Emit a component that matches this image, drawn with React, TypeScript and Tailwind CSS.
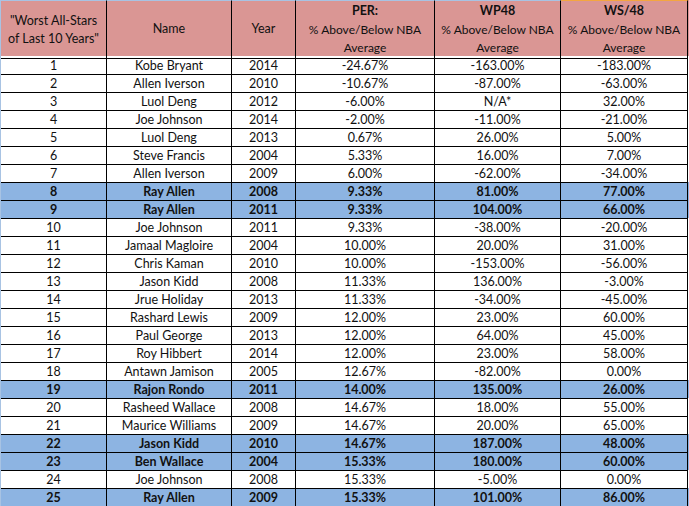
const rows: [string, string, string, string, string, string, boolean][] = [
  ["1", "Kobe Bryant", "2014", "-24.67%", "-163.00%", "-183.00%", false],
  ["2", "Allen Iverson", "2010", "-10.67%", "-87.00%", "-63.00%", false],
  ["3", "Luol Deng", "2012", "-6.00%", "N/A*", "32.00%", false],
  ["4", "Joe Johnson", "2014", "-2.00%", "-11.00%", "-21.00%", false],
  ["5", "Luol Deng", "2013", "0.67%", "26.00%", "5.00%", false],
  ["6", "Steve Francis", "2004", "5.33%", "16.00%", "7.00%", false],
  ["7", "Allen Iverson", "2009", "6.00%", "-62.00%", "-34.00%", false],
  ["8", "Ray Allen", "2008", "9.33%", "81.00%", "77.00%", true],
  ["9", "Ray Allen", "2011", "9.33%", "104.00%", "66.00%", true],
  ["10", "Joe Johnson", "2011", "9.33%", "-38.00%", "-20.00%", false],
  ["11", "Jamaal Magloire", "2004", "10.00%", "20.00%", "31.00%", false],
  ["12", "Chris Kaman", "2010", "10.00%", "-153.00%", "-56.00%", false],
  ["13", "Jason Kidd", "2008", "11.33%", "136.00%", "-3.00%", false],
  ["14", "Jrue Holiday", "2013", "11.33%", "-34.00%", "-45.00%", false],
  ["15", "Rashard Lewis", "2009", "12.00%", "23.00%", "60.00%", false],
  ["16", "Paul George", "2013", "12.00%", "64.00%", "45.00%", false],
  ["17", "Roy Hibbert", "2014", "12.00%", "23.00%", "58.00%", false],
  ["18", "Antawn Jamison", "2005", "12.67%", "-82.00%", "0.00%", false],
  ["19", "Rajon Rondo", "2011", "14.00%", "135.00%", "26.00%", true],
  ["20", "Rasheed Wallace", "2008", "14.67%", "18.00%", "55.00%", false],
  ["21", "Maurice Williams", "2009", "14.67%", "20.00%", "65.00%", false],
  ["22", "Jason Kidd", "2010", "14.67%", "187.00%", "48.00%", true],
  ["23", "Ben Wallace", "2004", "15.33%", "180.00%", "60.00%", true],
  ["24", "Joe Johnson", "2008", "15.33%", "-5.00%", "0.00%", false],
  ["25", "Ray Allen", "2009", "15.33%", "101.00%", "86.00%", true],
];

const grid = "grid grid-cols-[106px_125px_64px_139px_126px_127px]";

function StatHead({ label, top = "border-t-[#a8c3e3]" }: { label: string; top?: string }) {
  return (
    <div className={`flex flex-col items-center justify-center whitespace-nowrap border-r border-b border-t ${top} border-r-black border-b-black leading-[18.5px] pt-px`}>
      <span className="font-bold text-[12.5px]">{label}</span>
      <span className="text-[12px]">% Above/Below NBA</span>
      <span className="text-[12px]">Average</span>
    </div>
  );
}

export default function App() {
  return (
    <div
      className="w-[689px] h-[506px] bg-white border-l border-l-[#a8c3e3] text-[#111] text-[12.5px] overflow-hidden"
      style={{ fontFamily: "Lato, 'Liberation Sans', sans-serif" }}
    >
      {/* Header */}
      <div className={`${grid} h-[56px] bg-[#da9694]`}>
        <div className="flex flex-col items-center justify-center whitespace-nowrap border-r border-b border-t border-t-[#a8c3e3] border-r-black border-b-black leading-[18px] pt-px">
          <span>"Worst All-Stars</span>
          <span>of Last 10 Years"</span>
        </div>
        <div className="flex items-center justify-center border-r border-b border-t border-t-[#a8c3e3] border-r-black border-b-black pt-px">
          Name
        </div>
        <div className="flex items-center justify-center border-r border-b border-t border-t-[#a8c3e3] border-r-black border-b-black pt-px">
          Year
        </div>
        <StatHead label="PER:" />
        <StatHead label="WP48" />
        <StatHead label="WS/48" top="border-t-[#f4a640]" />
      </div>

      {rows.map(([rank, name, year, per, wp, ws, hl]) => (
        <div
          key={rank}
          className={`${grid} h-[18px] leading-[17px] ${hl ? "bg-[#8db4e2] font-bold" : "bg-white"}`}
        >
          {[rank, name, year, per, wp, ws].map((v, i) => (
            <div key={i} className="text-center border-r border-b border-black pt-px whitespace-nowrap">
              {v}
            </div>
          ))}
        </div>
      ))}
    </div>
  );
}
